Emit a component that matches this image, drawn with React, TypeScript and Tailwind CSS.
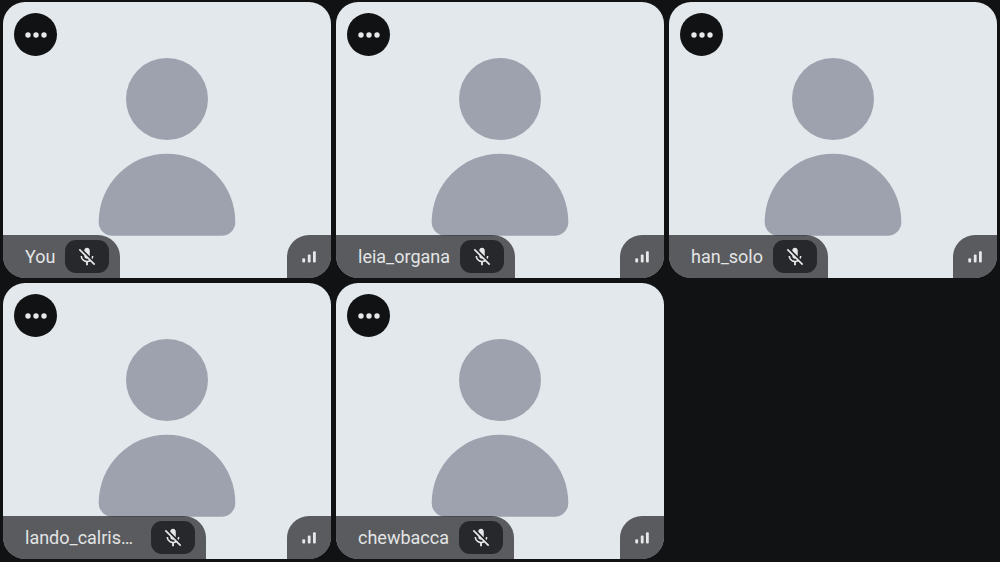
import React from "react";

const participants = ["You", "leia_organa", "han_solo", "lando_calrissian", "chewbacca"];

function Avatar() {
  return (
    <svg
      className="absolute inset-0 h-full w-full fill-[#9da2ae]"
      viewBox="0 0 24 24"
      preserveAspectRatio="xMidYMid slice"
      aria-hidden="true"
    >
      <circle cx="12" cy="9" r="3" />
      <path d="M12 13a5 5 0 0 1 5 5a1 1 0 0 1-1 1H8a1 1 0 0 1-1-1a5 5 0 0 1 5-5z" />
    </svg>
  );
}

function MicOffIcon() {
  return (
    <svg className="size-[22px]" viewBox="0 0 24 24" fill="currentColor" aria-hidden="true">
      <path d="M19 11h-1.7c0 .74-.16 1.43-.43 2.05l1.23 1.23c.56-.98.9-2.09.9-3.28zm-4.02.17c0-.06.02-.11.02-.17V5c0-1.66-1.34-3-3-3S9 3.34 9 5v.18l5.98 5.99zM4.27 3L3 4.27l6.01 6.01V11c0 1.66 1.33 3 2.99 3 .22 0 .44-.03.65-.08l1.66 1.66c-.71.33-1.5.52-2.31.52-2.76 0-5.3-2.1-5.3-5.1H5c0 3.41 2.72 6.23 6 6.72V21h2v-3.28c.91-.13 1.77-.45 2.54-.9L19.73 21 21 19.73 4.27 3z" />
    </svg>
  );
}

function SignalIcon() {
  return (
    <svg className="size-[22px]" viewBox="0 0 22 22" fill="currentColor" aria-hidden="true">
      <rect x="4.3" y="12.2" width="2.8" height="4.2" rx="1" />
      <rect x="9.8" y="8.5" width="2.8" height="7.9" rx="1" />
      <rect x="15" y="5.2" width="2.8" height="11.2" rx="1" />
    </svg>
  );
}

function MoreIcon() {
  return (
    <svg className="size-[22px]" viewBox="0 0 22 22" fill="currentColor" aria-hidden="true">
      <circle cx="3" cy="11" r="2.7" />
      <circle cx="11" cy="11" r="2.7" />
      <circle cx="19" cy="11" r="2.7" />
    </svg>
  );
}

function Tile({ name }: { name: string }) {
  return (
    <article className="relative flex min-h-0 min-w-0 flex-col justify-between overflow-hidden rounded-[22px] bg-[#e3e8ec]">
      <Avatar />
      <div className="relative p-[11px]">
        <button
          type="button"
          aria-label={`Options for ${name}`}
          className="flex size-[43px] items-center justify-center rounded-full bg-[#101213] text-[#e7e8e9]"
        >
          <MoreIcon />
        </button>
      </div>
      <footer className="relative flex items-stretch justify-between">
        <div className="flex h-[43px] min-w-0 items-center gap-[10px] rounded-tr-[22px] bg-[#101213]/66 pr-[11px] pl-[22px]">
          <span className="max-w-[116px] truncate text-[18px] leading-[24px] text-[#e3e4e5]">{name}</span>
          <span className="flex h-[33px] w-[44px] shrink-0 items-center justify-center rounded-[11px] bg-[#121315]/70 text-[#e7e8e9]">
            <MicOffIcon />
          </span>
        </div>
        <div className="flex h-[43px] w-[44px] shrink-0 items-center justify-center rounded-tl-[22px] bg-[#101213]/66 text-[#e7e8e9]">
          <SignalIcon />
        </div>
      </footer>
    </article>
  );
}

export default function App() {
  return (
    <main className="grid h-screen grid-cols-3 grid-rows-2 gap-[5px] bg-[#101213] px-[3px] pt-[2px] pb-[3px] font-[Roboto,sans-serif]">
      {participants.map((name) => (
        <Tile key={name} name={name} />
      ))}
    </main>
  );
}
